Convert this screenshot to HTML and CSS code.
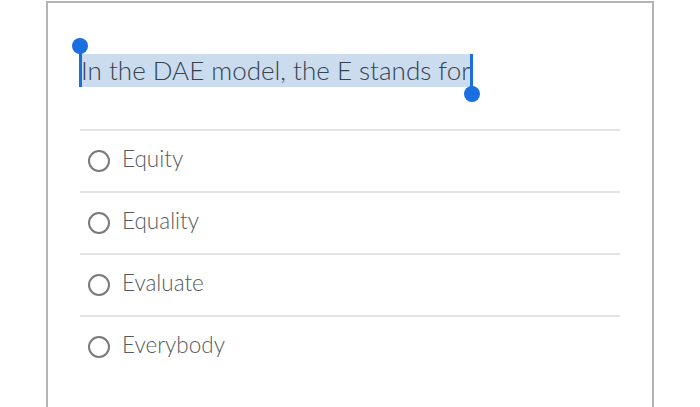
FILE: index.html
```html
<!DOCTYPE html>
<html>
<head>
<meta charset="utf-8">
<link rel="stylesheet" href="styles.css">
</head>
<body>
<div class="panel">
  <div class="question">
    <span class="sel">In the DAE model, the E stands for<span class="handle start"></span><span class="handle end"></span></span>
  </div>
  <ul class="answers">
    <li><span class="radio"></span><span class="label">Equity</span></li>
    <li><span class="radio"></span><span class="label">Equality</span></li>
    <li><span class="radio"></span><span class="label">Evaluate</span></li>
    <li><span class="radio"></span><span class="label">Everybody</span></li>
  </ul>
</div>
</body>
</html>
```
FILE: styles.css
```css
html, body {
  margin: 0;
  padding: 0;
  background: #ffffff;
  overflow: hidden;
}
body {
  font-family: Lato, "Liberation Sans", sans-serif;
}
.panel {
  margin: 1px 0 0 46px;
  width: 604px;
  height: 420px;
  border: 2px solid #b4b4b4;
  border-bottom: none;
}
.question {
  padding: 51px 0 0 32px;
  height: 126px;
  box-sizing: border-box;
}
.sel {
  position: relative;
  display: inline-block;
  font-size: 26px;
  font-weight: 300;
  line-height: 33px;
  color: #36424e;
  background: #cadcee;
  padding: 0 2px 0 1px;
}
.handle {
  position: absolute;
  width: 3px;
  background: #1a6fe0;
}
.handle::after {
  content: "";
  position: absolute;
  width: 16px;
  height: 16px;
  border-radius: 50%;
  background: #1a6fe0;
  left: -7px;
}
.handle.start {
  left: -1px;
  top: -8px;
  height: 41px;
}
.handle.start::after {
  top: -8px;
}
.handle.end {
  right: -1px;
  top: 0;
  height: 40px;
}
.handle.end::after {
  bottom: -8px;
  left: -6px;
}
.answers {
  list-style: none;
  margin: 0 32px;
  padding: 0;
}
.answers li {
  display: flex;
  align-items: center;
  padding-bottom: 1px;
  box-sizing: content-box;
  height: 59px;
  border-top: 2px solid #e3e3e3;
}
.radio {
  width: 18px;
  height: 18px;
  border: 2.5px solid #7a7a7a;
  border-radius: 50%;
  margin-left: 8px;
  margin-right: 12px;
  flex: none;
}
.label {
  font-size: 22.5px;
  font-weight: 300;
  line-height: 1;
  margin-bottom: 2px;
  color: #565b60;
}
```
